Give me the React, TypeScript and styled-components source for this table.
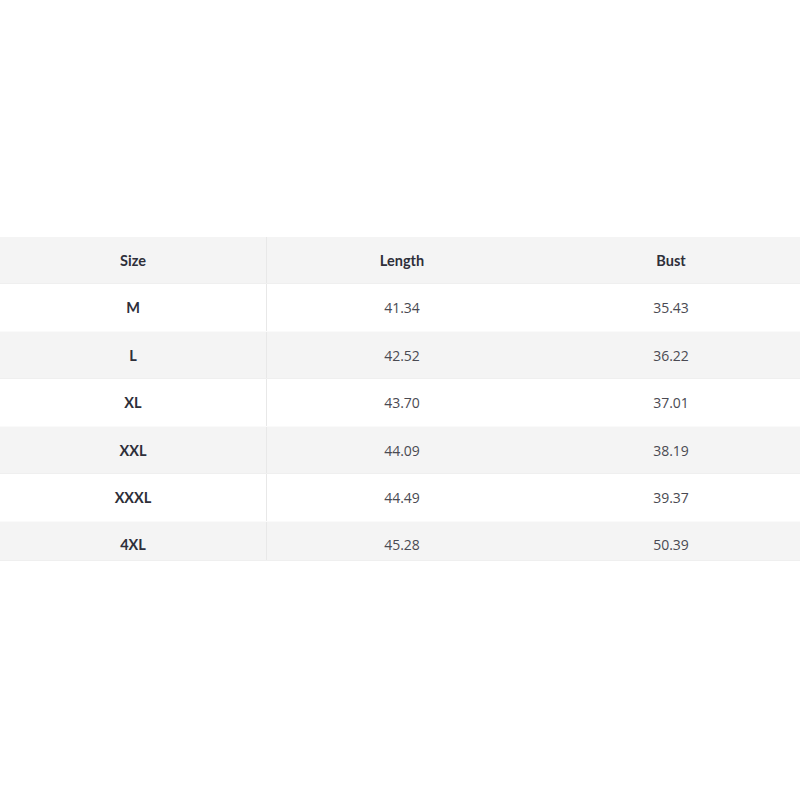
import styled, { createGlobalStyle } from 'styled-components';

const GlobalStyle = createGlobalStyle`
  html, body {
    margin: 0;
    padding: 0;
    background: #ffffff;
  }
`;

const Page = styled.div`
  width: 800px;
  height: 800px;
  display: flex;
  align-items: center;
  padding-bottom: 2px;
  box-sizing: border-box;
  overflow: hidden;
`;

const Table = styled.div`
  width: 805px;
  flex-shrink: 0;
  display: flex;
  flex-direction: column;
`;

const Row = styled.div<{ $striped?: boolean; $height?: number }>`
  display: grid;
  grid-template-columns: 267px 270px 268px;
  height: ${({ $height = 47.5 }) => `${$height}px`};
  background: ${({ $striped }) => ($striped ? '#f4f4f4' : '#ffffff')};
  border-bottom: 1px solid ${({ $striped }) => ($striped ? '#efefef' : '#fafafa')};
  box-sizing: border-box;
`;

const Cell = styled.div<{ $bold?: boolean; $divider?: boolean; $clipped?: boolean }>`
  display: flex;
  align-items: center;
  justify-content: center;
  padding-top: ${({ $clipped }) => ($clipped ? '7px' : '0')};
  font-family: ${({ $bold }) => ($bold ? '"Lato", "Open Sans", sans-serif' : '"Open Sans", "Liberation Sans", sans-serif')};
  font-weight: ${({ $bold }) => ($bold ? 700 : 400)};
  font-size: ${({ $bold }) => ($bold ? '14.5px' : '14px')};
  color: ${({ $bold }) => ($bold ? '#2e2f3a' : '#4a4a52')};
  border-right: ${({ $divider }) => ($divider ? '1px solid #e8e8e8' : 'none')};
`;

const HEADERS = ['Size', 'Length', 'Bust'];

const ROWS = [
  ['M', '41.34', '35.43'],
  ['L', '42.52', '36.22'],
  ['XL', '43.70', '37.01'],
  ['XXL', '44.09', '38.19'],
  ['XXXL', '44.49', '39.37'],
  ['4XL', '45.28', '50.39'],
];

export default function App() {
  return (
    <>
      <GlobalStyle />
      <Page>
        <Table>
          <Row $striped $height={47}>
            {HEADERS.map((h, i) => (
              <Cell key={h} $bold $divider={i === 0}>
                {h}
              </Cell>
            ))}
          </Row>
          {ROWS.map(([size, length, bust], index) => {
            // the last row is cut off at the bottom of the table
            const last = index === ROWS.length - 1;
            return (
              <Row key={size} $striped={index % 2 === 1} $height={last ? 39 : 47.5}>
                <Cell $bold $divider $clipped={last}>
                  {size}
                </Cell>
                <Cell $clipped={last}>{length}</Cell>
                <Cell $clipped={last}>{bust}</Cell>
              </Row>
            );
          })}
        </Table>
      </Page>
    </>
  );
}
